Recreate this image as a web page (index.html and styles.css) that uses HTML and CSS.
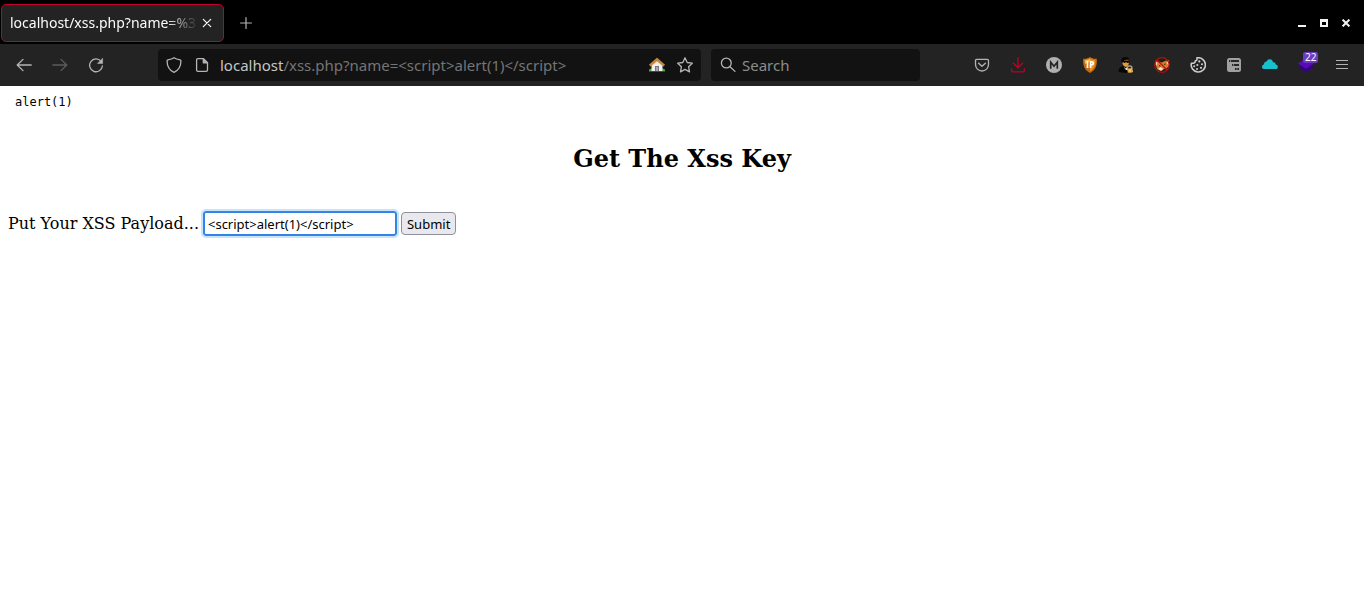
FILE: index.html
```html
<!DOCTYPE html>
<html lang="en">
<head>
<meta charset="utf-8">
<title>localhost/xss.php</title>
<link rel="stylesheet" href="styles.css">
</head>
<body>
<div class="tabbar">
  <div class="tab">
    <span class="tab-title">localhost/xss.php?name=%3</span>
    <button class="icon-btn tab-close" aria-label="Close tab"><svg width="10" height="10" viewBox="0 0 10 10" stroke="#fbfbfe" stroke-width="1.2" stroke-linecap="round"><path d="M1.3 1.3l7.4 7.4M8.7 1.3L1.3 8.7"/></svg></button>
  </div>
  <button class="icon-btn new-tab" aria-label="New tab"><svg width="12" height="12" viewBox="0 0 12 12" stroke="#b4b4b4" stroke-width="1.2" stroke-linecap="round"><path d="M6 .6v10.8M.6 6h10.8"/></svg></button>
  <div class="window-controls">
    <button class="icon-btn win" aria-label="Minimize"><svg width="8" height="8" viewBox="0 0 8 8"><path d="M0 6h8v2H0z" fill="#f2f2f2"/></svg></button>
    <button class="icon-btn win" aria-label="Maximize"><svg width="8" height="8" viewBox="0 0 8 8"><path d="M0 0h8v8H0zM2 3v3h4V3z" fill="#f2f2f2" fill-rule="evenodd"/></svg></button>
    <button class="icon-btn win" aria-label="Close window"><svg width="8" height="8" viewBox="0 0 8 8" stroke="#f2f2f2" stroke-width="2"><path d="M.6.6l6.8 6.8M7.4.6L.6 7.4"/></svg></button>
  </div>
</div>
<div class="toolbar">
  <button class="icon-btn tool" aria-label="Back"><svg width="16" height="16" viewBox="0 0 16 16" class="line"><path d="M15.2 8H1.4M7 2.4L1.2 8 7 13.6"/></svg></button>
  <button class="icon-btn tool dim" aria-label="Forward"><svg width="16" height="16" viewBox="0 0 16 16" class="line"><path d="M.8 8h13.8M9 2.4L14.8 8 9 13.6"/></svg></button>
  <button class="icon-btn tool" aria-label="Reload"><svg width="16" height="16" viewBox="0 0 16 16" class="line"><path d="M13 4.3A6.4 6.4 0 1 0 14.4 9"/><path d="M14.6 1.6v4.8H9.8z" fill="currentColor" stroke-width=".6"/></svg></button>
  <div class="spring"></div>
  <div class="urlbar">
    <button class="icon-btn bar-icon" aria-label="Tracking protection"><svg width="16" height="16" viewBox="0 0 16 16" class="line"><path d="M8 .7C6.2 2 3.8 2.500 1.900 2.800c-.5.1-.8.4-.8.9C1 9.300 3.500 13.400 8 15.400c4.500-2 7-6.100 6.900-11.700 0-.5-.3-.8-.8-.9C12.200 2.500 9.800 2 8 .7z"/></svg></button>
    <button class="icon-btn bar-icon" aria-label="Site information"><svg width="16" height="16" viewBox="0 0 16 16" class="line"><path d="M4 1.600h5.500l4 4V13a1.400 1.400 0 0 1-1.400 1.400H4A1.400 1.400 0 0 1 2.600 13V3A1.400 1.400 0 0 1 4 1.600z"/><path d="M9.300 2v3.800h4z" fill="currentColor"/></svg></button>
    <a class="url" href="#"><span class="host">localhost</span>/xss.php?name=&lt;script&gt;alert(1)&lt;/script&gt;</a>
    <button class="icon-btn bar-icon" aria-label="Home"><svg width="16" height="16" viewBox="0 0 16 16"><path d="M0 12.500l2-1h12l2 1v2H0z" fill="#43a63b"/><path d="M2.500 7.500L8 3l5.500 4.500V14h-11z" fill="#f0eeee"/><path d="M6 9h4v5H6z" fill="#77777d"/><path d="M7 10h2v4H7z" fill="#a8a8ae"/><path d="M.3 7.800L8 1l7.700 6.800-1.500 1.400L8 4.300 1.800 9.200z" fill="#c58438" stroke="#e3ad62" stroke-width=".5"/></svg></button>
    <button class="icon-btn bar-icon" aria-label="Bookmark"><svg width="16" height="16" viewBox="0 0 16 16" class="line"><path d="M8 .8l2.200 4.700 5.100.7-3.700 3.500.9 5.200L8 12.400l-4.500 2.500.9-5.200L.7 6.200l5.100-.7z"/></svg></button>
  </div>
  <div class="searchbar">
    <svg width="16" height="16" viewBox="0 0 16 16" class="line"><circle cx="6.300" cy="6" r="4.900"/><path d="M10 9.700l5 4.700"/></svg>
    <input class="search" type="text" placeholder="Search" aria-label="Search">
  </div>
  <div class="spring"></div>
  <button class="icon-btn tool" aria-label="Pocket"><svg width="16" height="16" viewBox="0 0 16 16" class="line"><path d="M2.700 2.300h10.600c.7 0 1.200.5 1.200 1.200v4A6.500 6.500 0 0 1 1.500 7.500v-4c0-.7.5-1.200 1.200-1.200z"/><path d="M4.600 6.200L8 9.300l3.400-3.100"/></svg></button>
  <button class="icon-btn tool download" aria-label="Downloads"><svg width="16" height="16" viewBox="0 0 16 16" class="line"><path d="M8 .7v9.800M3.400 6.300L8 10.700l4.600-4.400M1.600 11.800v1.600c0 .9.500 1.400 1.400 1.400h10c.9 0 1.400-.5 1.400-1.400v-1.600"/></svg></button>
  <button class="icon-btn tool" aria-label="Account"><svg width="16" height="16" viewBox="0 0 16 16"><circle cx="8" cy="8" r="8" fill="#b0b0b0"/><path d="M4.700 11.700V5.200L8 9.200l3.300-4v6.500" fill="none" stroke="#252525" stroke-width="1.700"/></svg></button>
  <button class="icon-btn tool" aria-label="IP address"><svg width="16" height="16" viewBox="0 0 16 16"><path d="M8 0c2 1.600 4.300 2 6.800 1.700C15.300 8.300 13.500 13 8 16 2.500 13 .7 8.300 1.200 1.700 3.700 2 6 1.600 8 0z" fill="#c66a12"/><path d="M8 1.500c1.600 1.100 3.300 1.500 5.300 1.400C13.500 8 12 11.900 8 14.300z" fill="#e8961d"/><path d="M2.700 2.900C4.800 3 6.400 2.600 8 1.500v3L3 7z" fill="#f3bc49"/><path d="M5.500 4v7M8.500 11V4.800h1.200c2.200 0 2.200 3 0 3H8.500" fill="none" stroke="#fff" stroke-width="1.700"/></svg></button>
  <button class="icon-btn tool" aria-label="Identity"><svg width="16" height="16" viewBox="0 0 16 16"><path d="M.6 14.500C.6 11.500 2 10 5 9.300h4.500l3 2.200 1 4.100C9 16.200 4 16 .6 14.500z" fill="#050505"/><path d="M4 3c1-2 5-2.200 6.600-.4l.2 3.600c-.4 2.600-1.500 3.800-3 3.800C5.500 9.600 4.200 7.500 4 3z" fill="#e19a35"/><path d="M3.300 4.600C2.700 1.200 5.500-.1 8 .1c2 .2 3.200 1.300 3.200 2.700L6.500 3 4.700 6z" fill="#080808"/><path d="M5 3.500h6.300v1.700l-2 .7-1.200-.8-1.200.8L5 5z" fill="#000"/><path d="M5.700 9.700l2 1.800 1.700-2 .6 4-2.600-1z" fill="#ececec"/><path d="M9.500 12.300V11c0-2.800 4.500-2.800 4.500 0v1" fill="none" stroke="#aaa" stroke-width="1.200"/><path d="M9.500 11.500l4.500-.5 1.200 3.500-1.500 1.300h-4z" fill="#e2aa3e"/><path d="M11.500 12.500h1v2h-1z" fill="#fff0a8"/></svg></button>
  <button class="icon-btn tool" aria-label="Proxy"><svg width="16" height="16" viewBox="0 0 16 16"><circle cx="8" cy="8" r="7" fill="#202020"/><path d="M.8 3.500l3 1.200L8 5.500l3.500-1.700 3.700-.6-.5 6-2 2-3 .8L7 14l-4-2z" fill="#d87c2d"/><path d="M1 4l2.500 2L2 9zM14.800 3.500L12.500 6l2 2zM4 12l2.500-2 3 2L7 13.800z" fill="#f4dfc8"/><path d="M5 8.500l1.500.7M10 7.500l1.500-.5" stroke="#472008" stroke-width="1"/><circle cx="8" cy="8" r="7.300" fill="none" stroke="#b80d0d" stroke-width="1.200"/><path d="M3 3l10 10" stroke="#c70c0c" stroke-width="1.200"/></svg></button>
  <button class="icon-btn tool" aria-label="Cookies"><svg width="16" height="16" viewBox="0 0 16 16"><path d="M7 .9c.3 1.700-.3 2.700-1.700 3.100.1 1.500-1.300 2.600-3.900 2.200A7.100 7.100 0 1 0 7 .9z" fill="none" stroke="#cecece" stroke-width="1.600" stroke-linejoin="round"/><g fill="#cecece"><circle cx="9.300" cy="4.400" r="1.100"/><circle cx="7.300" cy="8" r="1.100"/><circle cx="12" cy="7.300" r="1"/><circle cx="4.200" cy="9.200" r="1"/><circle cx="11" cy="10.800" r="1.100"/><circle cx="7" cy="12" r="1"/></g></svg></button>
  <button class="icon-btn tool" aria-label="Page tree"><svg width="16" height="16" viewBox="0 0 16 16"><rect x="1" y="1" width="14" height="14" rx="2.500" fill="#a0a0a0"/><path d="M3 3h10v2H3zM6 7h7v2H6zM9 11h4v2H9z" fill="#292929"/><path d="M4 3.500h1v1H4zM7 7.500h1v1H7zM10.500 11.500h1v1h-1z" fill="#c0c0c0"/></svg></button>
  <button class="icon-btn tool" aria-label="Cloud"><svg width="16" height="16" viewBox="0 0 16 16"><path d="M2.500 12C-.8 12-.7 7.900 2 7.500 2 5 3.700 4.300 4.700 4.500 5.500 1.300 10.500 1.300 11 5.300c1.700-.3 2.700.8 2.600 2.300 2.800 0 3.100 4.400 0 4.400z" fill="#18c0ce"/></svg></button>
  <button class="icon-btn tool" aria-label="Layers, 22"><span class="layers"><svg width="16" height="16" viewBox="0 0 16 16"><path d="M0 10l8-4.500 8 4.500-8 5.700z" fill="#35057d"/><path d="M0 6.500L8 1l8 5.500-8 5.200z" fill="#5b09bd"/></svg><span class="badge">22</span></span></button>
  <button class="icon-btn tool" aria-label="Menu"><svg width="16" height="16" viewBox="0 0 16 16" stroke="#b4b4b4"><path d="M2 3.500h12M2 7.500h12M2 11.500h12"/></svg></button>
</div>
<main class="page">
  <pre class="output">alert(1)</pre>
  <h2 class="heading">Get The Xss Key</h2>
  <form class="payload" action="#">
    <label for="name">Put Your XSS Payload...</label>
    <input class="field" id="name" name="name" type="text" value="&lt;script&gt;alert(1)&lt;/script&gt;">
    <button class="submit" type="submit">Submit</button>
  </form>
</main>
</body>
</html>
```

FILE: styles.css
```css
* { box-sizing: border-box; }
body {
  margin: 0;
  background: #fff;
  color: #000;
  font: 16px/20px "DejaVu Serif", serif;
}
svg { display: block; flex: none; }
.icon-btn {
  display: flex;
  align-items: center;
  justify-content: center;
  flex: none;
  padding: 0;
  border: 0;
  background: none;
  color: #b4b4b4;
}
.line {
  fill: none;
  stroke: currentColor;
  stroke-width: 1.3;
  stroke-linecap: round;
  stroke-linejoin: round;
}
.tabbar {
  display: flex;
  align-items: center;
  height: 44px;
  padding: 2px 7px 0 1px;
  background: #000;
  font-family: "Noto Sans", sans-serif;
}
.tab {
  display: flex;
  align-items: center;
  width: 223px;
  height: 38px;
  padding: 0 7px 0 8px;
  border: 1px solid #c00028;
  border-radius: 5px;
  background: #232323;
}
.tab-title {
  flex: 1;
  white-space: nowrap;
  color: #fbfbfe;
  font-size: 14px;
  -webkit-mask-image: linear-gradient(to left, transparent, #000 32px);
  mask-image: linear-gradient(to left, transparent, #000 32px);
}
.tab-close { width: 18px; height: 18px; }
.new-tab { width: 36px; height: 36px; margin-left: 4px; }
.window-controls { display: flex; margin-left: auto; }
.win { width: 22px; height: 22px; }
.toolbar {
  display: flex;
  align-items: center;
  height: 42px;
  padding: 0 4px 0 6px;
  background: #232323;
  font-family: "Noto Sans", sans-serif;
}
.tool { width: 36px; height: 36px; }
.dim { color: #5c5c5c; }
.download { color: #c00028; }
.spring { flex: none; width: 44px; }
.urlbar, .searchbar {
  display: flex;
  align-items: center;
  height: 32px;
  border-radius: 4px;
  background: #121212;
  color: #b4b4b4;
}
.urlbar { flex: 1; min-width: 0; padding: 0 2px; }
.bar-icon { width: 28px; height: 28px; }
.url {
  flex: 1;
  min-width: 0;
  overflow: hidden;
  padding-left: 4px;
  white-space: nowrap;
  color: #757575;
  font-size: 15px;
  text-decoration: none;
}
.host { color: #c6c6c6; }
.searchbar { width: 209px; margin-left: 10px; padding: 0 9px; gap: 6px; }
.search {
  flex: 1;
  min-width: 0;
  padding: 0;
  border: 0;
  background: none;
  color: #c6c6c6;
  font: 15px/20px "Noto Sans", sans-serif;
}
.search::placeholder { color: #8c8c8c; opacity: 1; }
.layers { position: relative; display: block; }
.badge {
  position: absolute;
  top: -5px;
  left: 5px;
  padding: 0 2px;
  border-radius: 2px;
  background: #6b3cbc;
  color: #fff;
  font: 10px/11px "Noto Sans", sans-serif;
}
.page { padding: 8px; }
.output {
  margin: 0;
  padding-left: 7px;
  font: 12px/16px "DejaVu Sans Mono", monospace;
}
.heading {
  margin: 35px 0 38px;
  text-align: center;
  font-size: 24px;
  line-height: 28px;
}
.payload { display: flex; align-items: center; gap: 4px; }
.field {
  width: 194px;
  height: 25px;
  padding: 0 3px;
  border: 2px solid #3584e4;
  border-radius: 3px;
  outline: 2px solid #c4e4ff;
  background: #fff;
  color: #000;
  font: 13px/20px "Noto Sans", sans-serif;
}
.submit {
  height: 23px;
  padding: 0 5px;
  border: 1px solid #8f8f9d;
  border-radius: 4px;
  background: #e9e9ed;
  color: #000;
  font: 13px/20px "Noto Sans", sans-serif;
}
```
